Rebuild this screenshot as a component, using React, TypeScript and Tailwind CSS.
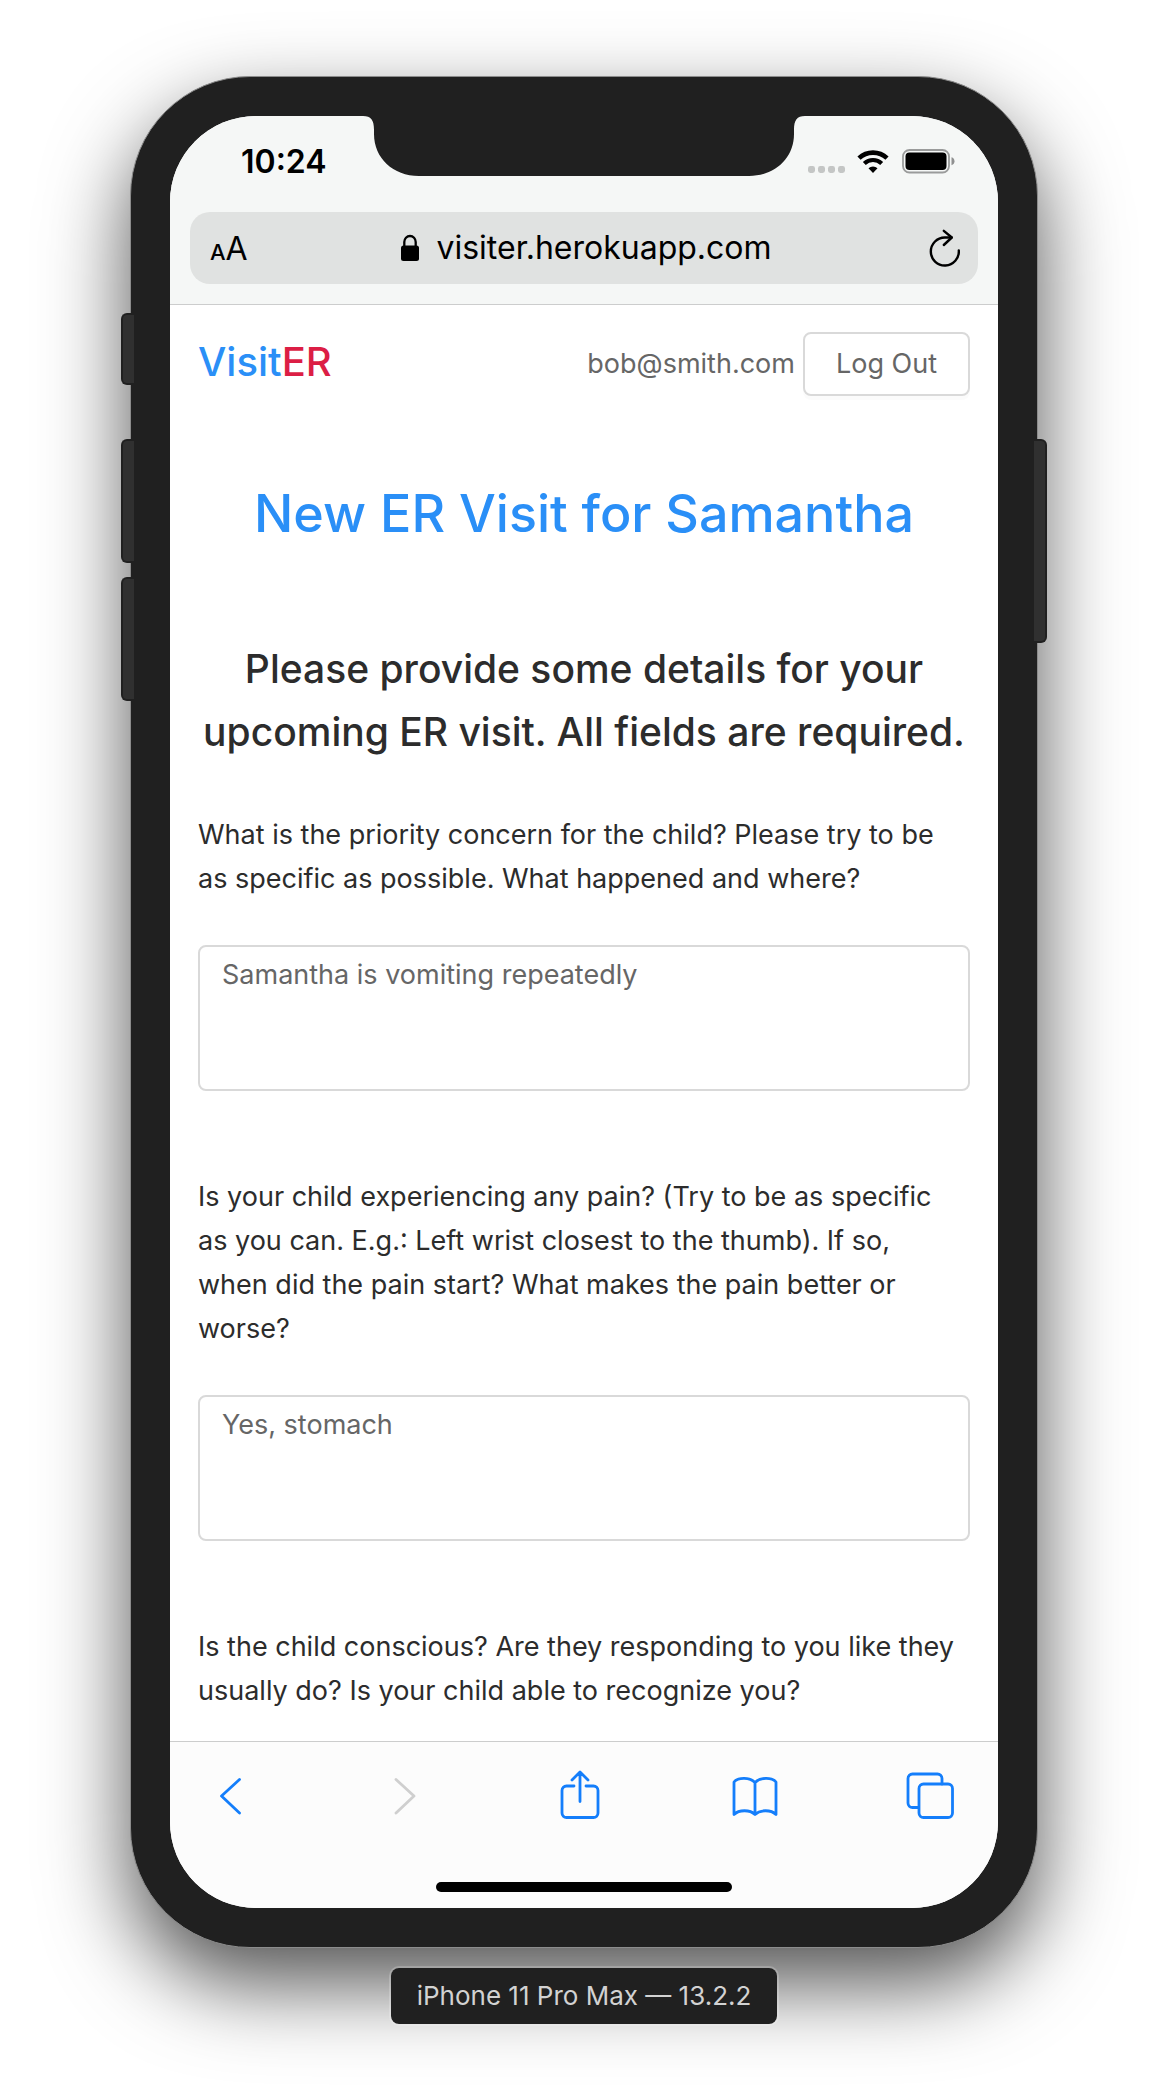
import type { ReactNode } from "react";

const questions = [
  {
    id: "concern",
    text: "What is the priority concern for the child? Please try to be as specific as possible. What happened and where?",
    answer: "Samantha is vomiting repeatedly",
  },
  {
    id: "pain",
    text: "Is your child experiencing any pain? (Try to be as specific as you can. E.g.: Left wrist closest to the thumb). If so, when did the pain start? What makes the pain better or worse?",
    answer: "Yes, stomach",
  },
];

function Notch() {
  return (
    <svg
      className="absolute left-1/2 top-0 -translate-x-1/2 fill-[#202020]"
      width="442"
      height="61"
      viewBox="0 0 442 61"
      aria-hidden="true"
    >
      <path d="M0 0C8 0 11 4 11 14V18C11 42 30 60 56 60H386C412 60 431 42 431 18V14C431 4 434 0 442 0Z" />
    </svg>
  );
}

function StatusBar() {
  return (
    <div className="flex h-24 items-center justify-between pb-1 pl-[71px] pr-[43px] text-black">
      <span className="text-[32px] font-semibold leading-9">10:24</span>
      <svg width="147" height="26" viewBox="0 0 147 26" aria-label="Wi-Fi on, battery full" role="img">
        <g fill="#c4c6c5">
          <rect x="0" y="17" width="7" height="7" rx="2.4" />
          <rect x="10" y="17" width="7" height="7" rx="2.4" />
          <rect x="20" y="17" width="7" height="7" rx="2.4" />
          <rect x="30" y="17" width="7" height="7" rx="2.4" />
        </g>
        <path d="M60.500 19.200a6.500 6.500 0 0 1 9 0L65 24Z" />
        <path d="M56.300 14.500a12.600 12.600 0 0 1 17.400 0" fill="none" stroke="#000" strokeWidth="4.200" />
        <path d="M51 9.200a20.300 20.300 0 0 1 28 0" fill="none" stroke="#000" strokeWidth="4.600" />
        <rect x="95" y="1" width="46" height="22.500" rx="6.500" fill="none" stroke="#9a9b9b" strokeWidth="1.800" />
        <rect x="97.500" y="3.500" width="41" height="17.500" rx="4" />
        <path d="M143.500 8.200c2 .6 3 2.200 3 4s-1 3.400-3 4Z" fill="#8f9090" />
      </svg>
    </div>
  );
}

function AddressBar() {
  return (
    <div className="px-5 pb-5">
      <div className="flex h-[72px] items-center justify-between rounded-[20px] bg-[#e0e2e1] pl-5 pr-4 text-black">
        <button type="button" aria-label="Text size" className="flex w-12 items-baseline pt-1 leading-10">
          <span className="text-[22px] font-medium">A</span>
          <span className="text-[32px]">A</span>
        </button>
        <button type="button" className="flex items-center gap-4 text-[32px] leading-10">
          <svg width="20" height="28" viewBox="0 0 20 28" aria-hidden="true">
            <rect x="1" y="11.500" width="18" height="15.500" rx="2.500" />
            <path d="M4.300 12V8a5.700 6 0 0 1 11.400 0V12" fill="none" stroke="#000" strokeWidth="2.300" />
          </svg>
          visiter.herokuapp.com
        </button>
        <button type="button" aria-label="Reload" className="flex w-12 justify-end">
          <svg
            width="36"
            height="40"
            viewBox="0 0 36 40"
            fill="none"
            stroke="#000"
            strokeWidth="2.400"
            strokeLinecap="round"
            strokeLinejoin="round"
            aria-hidden="true"
          >
            <path d="M32.800 22.500A14 14 0 1 1 18.800 9.500H25.500" />
            <path d="M17.800 2.800L25.800 9.500L17.800 17" />
          </svg>
        </button>
      </div>
    </div>
  );
}

function ToolButton({ label, disabled, children }: { label: string; disabled?: boolean; children: ReactNode }) {
  return (
    <button type="button" aria-label={label} disabled={disabled} className="text-[#147efb] disabled:text-[#cfcfcf]">
      <svg
        width="48"
        height="52"
        viewBox="0 0 48 52"
        fill="none"
        stroke="currentColor"
        strokeWidth="2.800"
        strokeLinecap="round"
        strokeLinejoin="round"
        aria-hidden="true"
      >
        {children}
      </svg>
    </button>
  );
}

function ToolBar() {
  return (
    <nav aria-label="Browser" className="border-t border-[#cccdcd] bg-[#fcfcfc] pt-[26px]">
      <div className="flex justify-between pl-9 pr-11">
        <ToolButton label="Back">
          <path d="M33.500 11.500L15.500 28L33.500 45" />
        </ToolButton>
        <ToolButton label="Forward" disabled>
          <path d="M15 11.500L33 28L15 45" />
        </ToolButton>
        <ToolButton label="Share">
          <path d="M18 18H10.500a4.500 4.500 0 0 0-4.500 4.500V45a4.500 4.500 0 0 0 4.500 4.500H37.500A4.500 4.500 0 0 0 42 45V22.500a4.500 4.500 0 0 0-4.500-4.500H30" />
          <path d="M24 33.500V4.500M16 12L24 4L32 12" />
        </ToolButton>
        <ToolButton label="Bookmarks">
          <path d="M24 14.500C19 9 7 9 3 14V46.500C8 41.500 19 41.500 24 46.500C29 41.500 40 41.500 45 46.500V14C41 9 29 9 24 14.500V46" />
        </ToolButton>
        <ToolButton label="Tabs">
          <rect x="13" y="16" width="33.500" height="33.500" rx="4.500" />
          <path d="M12.500 39.500H6.500a4.500 4.500 0 0 1-4.500-4.500V10.500A4.500 4.500 0 0 1 6.500 6H31.500A4.500 4.500 0 0 1 36 10.500V16" />
        </ToolButton>
      </div>
      <div className="flex justify-center pb-4 pt-[62px]">
        <div className="h-2.5 w-[296px] rounded-full bg-black" />
      </div>
    </nav>
  );
}

function Page() {
  return (
    <div className="px-7 pb-7 pt-[27px] text-[#2c2c2c]">
      <header className="flex items-center justify-between">
        <a href="#home" className="pb-1 text-[40px] font-medium leading-[60px] text-[#2a8ff7]">
          Visit<span className="text-[#dc1e45]">ER</span>
        </a>
        <div className="flex items-center gap-2 text-[27px] leading-10 text-[#666666]">
          <span>bob@smith.com</span>
          <button
            type="button"
            className="h-16 rounded-lg border-2 border-[#d9d9d9] bg-white px-[31px] shadow-[0_4px_0_rgba(0,0,0,0.015)]"
          >
            Log Out
          </button>
        </div>
      </header>
      <main>
        <h1 className="mt-20 text-center text-[52px] font-medium leading-[76px] text-[#2a8ff7]">
          New ER Visit for Samantha
        </h1>
        <h2 className="mt-[85px] text-center text-[39px] font-medium leading-[63px]">
          Please provide some details for your upcoming ER visit. All fields are required.
        </h2>
        <form className="mt-[50px] text-[27px] leading-[44px]">
          {questions.map((q) => (
            <div key={q.id} className="mb-[84px]">
              <label htmlFor={q.id} className="block pr-2">
                {q.text}
              </label>
              <textarea
                id={q.id}
                defaultValue={q.answer}
                className="mt-11 block h-[146px] w-full resize-none rounded-lg border-2 border-[#d9d9d9] bg-white px-[22px] py-1.5 text-[#666666]"
              />
            </div>
          ))}
          <p>
            Is the child conscious? Are they responding to you like they usually do? Is your child able to recognize
            you?
          </p>
        </form>
      </main>
    </div>
  );
}

export default function App() {
  return (
    <div className="flex min-h-screen flex-col items-center overflow-hidden bg-white px-[130px] pb-[72px] pt-[76px] font-[Inter,'Liberation_Sans',sans-serif]">
      <div className="relative w-full max-w-[908px] rounded-[120px] border border-[#8c8c8c] bg-[#202020] p-[39px] shadow-[0_36px_84px_rgba(0,0,0,0.68)]">
        <div className="absolute -left-[10px] top-[236px] h-[72px] w-[13px] rounded-l-md border-2 border-r-0 border-[#202020] bg-[#303030]" />
        <div className="absolute -left-[10px] top-[362px] h-[124px] w-[13px] rounded-l-md border-2 border-r-0 border-[#202020] bg-[#303030]" />
        <div className="absolute -left-[10px] top-[500px] h-[124px] w-[13px] rounded-l-md border-2 border-r-0 border-[#202020] bg-[#303030]" />
        <div className="absolute -right-[10px] top-[362px] h-[204px] w-[13px] rounded-r-md border-2 border-l-0 border-[#202020] bg-[#303030]" />
        <div className="relative overflow-hidden rounded-[86px] bg-white">
          <div className="border-b border-[#cccdcd] bg-[#f5f7f6]">
            <StatusBar />
            <AddressBar />
          </div>
          <Notch />
          <Page />
          <ToolBar />
        </div>
      </div>
      <div className="relative mt-5 rounded-lg bg-[#202020] px-[26px] py-2 text-[26px] leading-10 text-[#d2d2d2] outline-2 outline-white/20">
        iPhone 11 Pro Max — 13.2.2
      </div>
    </div>
  );
}
